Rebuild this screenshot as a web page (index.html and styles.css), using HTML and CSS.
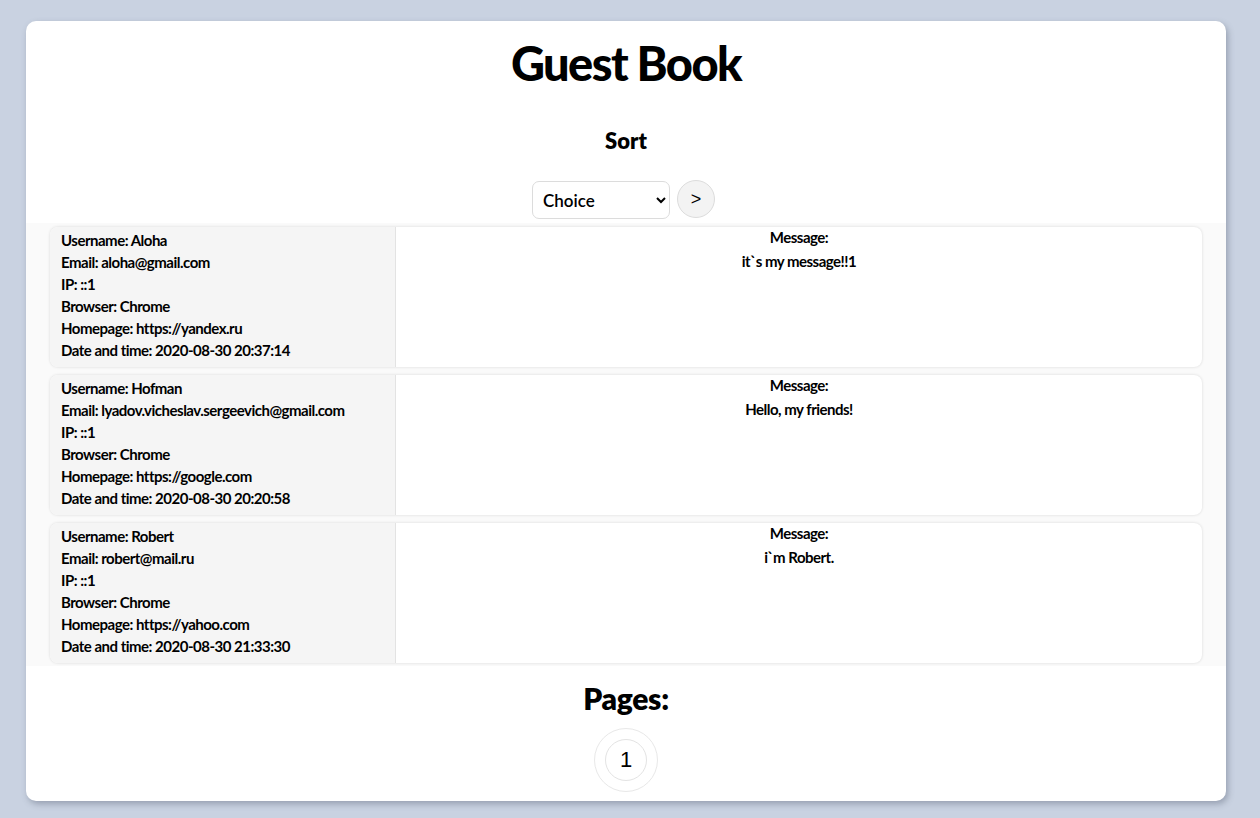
FILE: index.html
```html
<!DOCTYPE html>
<html lang="en">
<head>
<meta charset="utf-8">
<title>Guest Book</title>
<link rel="stylesheet" href="styles.css">
</head>
<body>
<main class="page">
  <h1 class="title">Guest Book</h1>
  <h3 class="sort-title">Sort</h3>
  <form class="sort-form">
    <select class="sort-select">
      <option>Choice</option>
    </select>
    <button type="button" class="sort-btn">&gt;</button>
  </form>
  <section class="list">
    <article class="card">
      <div class="info">
        <div>Username: Aloha</div>
        <div>Email: aloha@gmail.com</div>
        <div>IP: ::1</div>
        <div>Browser: Chrome</div>
        <div>Homepage: https://yandex.ru</div>
        <div>Date and time: 2020-08-30 20:37:14</div>
      </div>
      <div class="msg">
        <div>Message:</div>
        <div>it`s my message!!1</div>
      </div>
    </article>
    <article class="card">
      <div class="info">
        <div>Username: Hofman</div>
        <div>Email: lyadov.vicheslav.sergeevich@gmail.com</div>
        <div>IP: ::1</div>
        <div>Browser: Chrome</div>
        <div>Homepage: https://google.com</div>
        <div>Date and time: 2020-08-30 20:20:58</div>
      </div>
      <div class="msg">
        <div>Message:</div>
        <div>Hello, my friends!</div>
      </div>
    </article>
    <article class="card">
      <div class="info">
        <div>Username: Robert</div>
        <div>Email: robert@mail.ru</div>
        <div>IP: ::1</div>
        <div>Browser: Chrome</div>
        <div>Homepage: https://yahoo.com</div>
        <div>Date and time: 2020-08-30 21:33:30</div>
      </div>
      <div class="msg">
        <div>Message:</div>
        <div>i`m Robert.</div>
      </div>
    </article>
  </section>
  <h2 class="pages-title">Pages:</h2>
  <nav class="pager">
    <span class="page-ring"><span class="page-num">1</span></span>
  </nav>
</main>
</body>
</html>
```

FILE: styles.css
```css
html, body {
  margin: 0;
  padding: 0;
}
body {
  background: #c9d2e1;
  font-family: "Lato", "Open Sans", sans-serif;
  color: #000;
  padding: 21px 34px 17px 26px;
}
.page {
  background: #fff;
  border-radius: 10px;
  box-shadow: 2px 3px 6px rgba(90, 100, 120, 0.45);
  display: flex;
  flex-direction: column;
  align-items: center;
  height: 780px;
  overflow: hidden;
}
.title {
  margin: 12px 0 0;
  font-size: 47px;
  font-weight: 900;
  letter-spacing: -1.6px;
  line-height: 60px;
}
.sort-title {
  margin: 34px 0 0;
  font-size: 22px;
  font-weight: 800;
  line-height: 28px;
}
.sort-form {
  margin: 26px 5px 0 0;
  display: flex;
  align-items: center;
  gap: 7px;
}
.sort-select {
  width: 138px;
  height: 38px;
  border: 1px solid #dcdcdc;
  border-radius: 7px;
  background: #fff;
  font-family: "Lato", sans-serif;
  font-size: 17px;
  font-weight: 600;
  padding: 0 6px;
  color: #000;
}
.sort-btn {
  width: 38px;
  height: 38px;
  border-radius: 50%;
  border: 1px solid #dcdcdc;
  background: #f3f3f3;
  font-family: "Liberation Sans", Arial, sans-serif;
  font-size: 18px;
  padding: 0;
  margin-top: -2px;
  color: #000;
}
.list {
  align-self: stretch;
  background: #fafafa;
  margin-top: 4px;
  padding: 4px 24px 3px;
  display: flex;
  flex-direction: column;
  gap: 8px;
}
.card {
  display: flex;
  height: 140px;
  border-radius: 8px;
  background: #fff;
  overflow: hidden;
  box-shadow: 0 0 3px rgba(0, 0, 0, 0.14);
  font-size: 15px;
  font-weight: 700;
  letter-spacing: -0.5px;
}
.info {
  width: 334px;
  flex: none;
  background: #f5f5f5;
  border-right: 1px solid #e3e3e3;
  padding: 2px 0 0 11px;
  line-height: 22px;
}
.msg {
  flex: 1;
  text-align: center;
  line-height: 20px;
}
.msg div + div {
  margin-top: 4px;
}
.pages-title {
  margin: 12px 0 0;
  font-size: 30px;
  font-weight: 800;
  letter-spacing: -0.3px;
  line-height: 40px;
}
.pager {
  margin-top: 10px;
}
.page-ring {
  width: 62px;
  height: 62px;
  border: 1px solid #e8e8e8;
  border-radius: 50%;
  display: flex;
  align-items: center;
  justify-content: center;
}
.page-num {
  width: 40px;
  height: 40px;
  border: 1px solid #e3e3e3;
  border-radius: 50%;
  display: flex;
  align-items: center;
  justify-content: center;
  font-family: "Liberation Sans", Arial, sans-serif;
  font-size: 22px;
}
```
